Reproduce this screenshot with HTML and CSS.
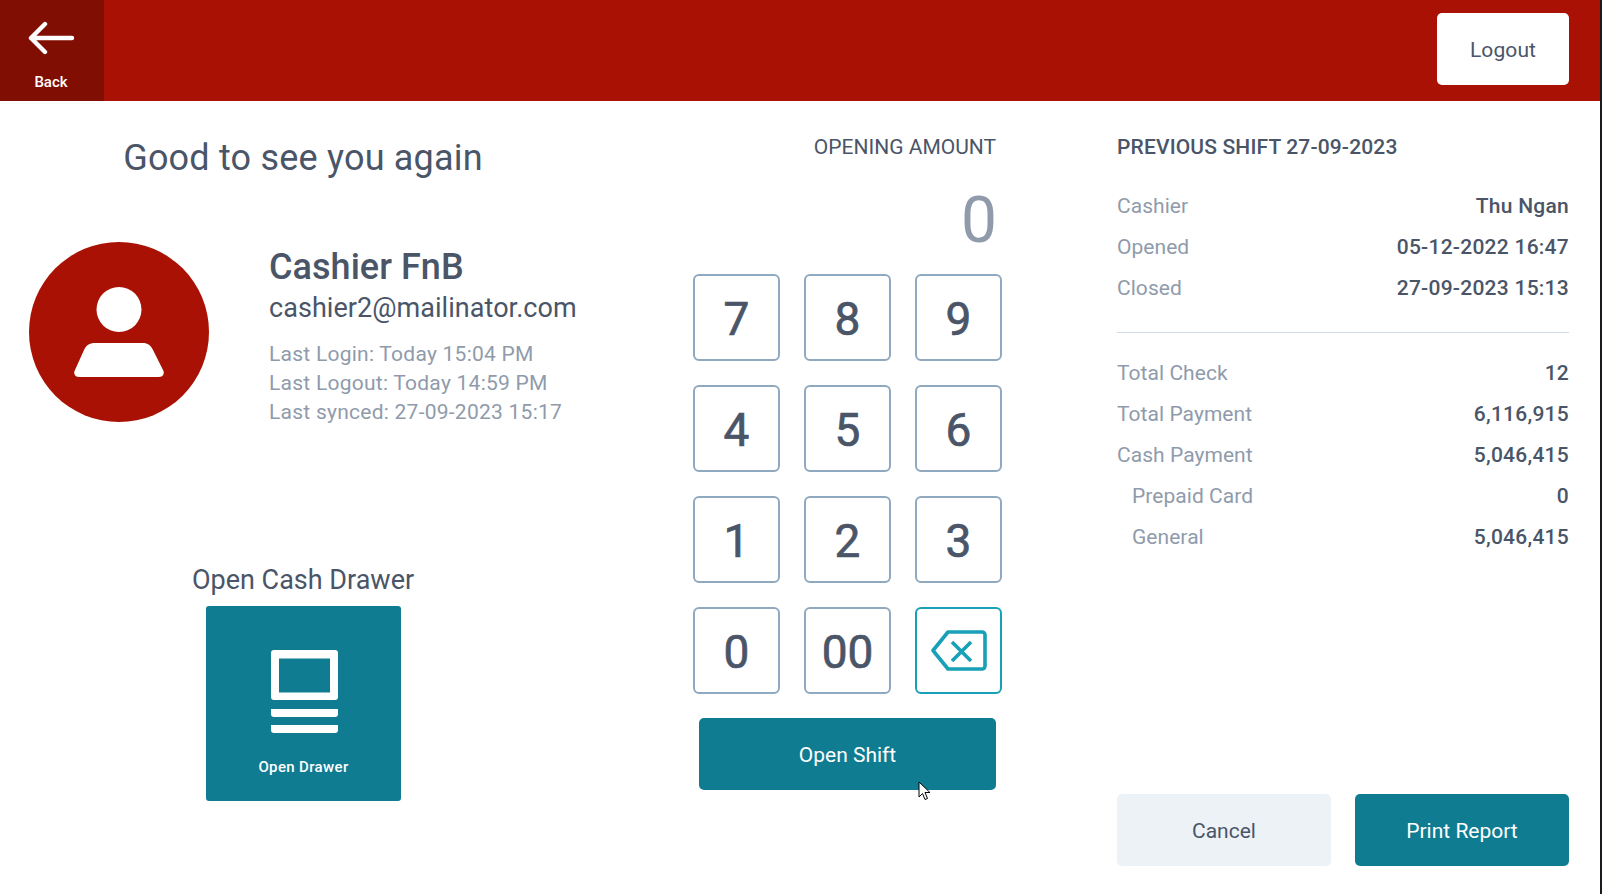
FILE: index.html
```html
<!DOCTYPE html>
<html lang="en">
<head>
<meta charset="utf-8">
<title>Open Shift</title>
<link rel="stylesheet" href="styles.css">
</head>
<body>
<div class="app">
  <header class="topbar">
    <button class="back">
      <svg class="back-icon" viewBox="0 0 48 34" width="48" height="34"><path d="M44 17H3M17 3 3 17l14 14" fill="none" stroke="#fff" stroke-width="4.400" stroke-linecap="round" stroke-linejoin="round"/></svg>
      <span>Back</span>
    </button>
    <button class="logout">Logout</button>
  </header>
  <main class="content">
    <section class="col-left">
      <h1 class="greeting">Good to see you again</h1>
      <div class="profile">
        <div class="avatar">
          <svg viewBox="0 0 180 180" width="180" height="180"><circle cx="90" cy="90" r="90" fill="#a81103"/><ellipse cx="90" cy="67.500" rx="22.500" ry="22.500" fill="#fff"/><path d="M66 101h48c4.500 0 8 2.500 10 7l10 20c2 3.500 0 7-4 7H50c-4 0-6-3.500-4-7l9-20c2-4.500 5.500-7 11-7z" fill="#fff"/></svg>
        </div>
        <div class="who">
          <div class="name">Cashier FnB</div>
          <div class="email">cashier2@mailinator.com</div>
          <div class="meta">Last Login: Today 15:04 PM</div>
          <div class="meta">Last Logout: Today 14:59 PM</div>
          <div class="meta">Last synced: 27-09-2023 15:17</div>
        </div>
      </div>
      <div class="drawer">
        <div class="drawer-title">Open Cash Drawer</div>
        <button class="drawer-tile">
          <svg viewBox="0 0 68 84" width="68" height="84"><path fill-rule="evenodd" d="M3 0h61a3 3 0 0 1 3 3v44a3 3 0 0 1-3 3H3a3 3 0 0 1-3-3V3a3 3 0 0 1 3-3zm5 8.500v34h51v-34zM0 59h67v5a3 3 0 0 1-3 3H3a3 3 0 0 1-3-3zM0 75h67v5a3 3 0 0 1-3 3H3a3 3 0 0 1-3-3z" fill="#fff"/></svg>
          <span>Open Drawer</span>
        </button>
      </div>
    </section>
    <section class="col-mid">
      <div class="amount-label">OPENING AMOUNT</div>
      <div class="amount">0</div>
      <div class="keypad">
        <button class="key">7</button><button class="key">8</button><button class="key">9</button>
        <button class="key">4</button><button class="key">5</button><button class="key">6</button>
        <button class="key">1</button><button class="key">2</button><button class="key">3</button>
        <button class="key">0</button><button class="key">00</button>
        <button class="key key-del">
          <svg viewBox="0 0 56 42" width="56" height="42"><path d="M17 2h34a3 3 0 0 1 3 3v31a3 3 0 0 1-3 3H17L2 20.500z" fill="none" stroke="#17a0b8" stroke-width="3.600" stroke-linejoin="round"/><path d="M21 12l19 19M40 12 21 31" fill="none" stroke="#17a0b8" stroke-width="3.600"/></svg>
        </button>
      </div>
      <button class="btn btn-teal open-shift">Open Shift</button>
      <svg class="cursor" viewBox="0 0 13 20" width="13" height="20"><path d="M1 1v15l3.500-3.500 2.500 6 2.500-1-2.500-6h5z" fill="#fff" stroke="#000" stroke-width="1"/></svg>
    </section>
    <section class="col-right">
      <h2 class="prev-title">PREVIOUS SHIFT 27-09-2023</h2>
      <div class="rows rows-top">
        <div class="row"><span>Cashier</span><b>Thu Ngan</b></div>
        <div class="row"><span>Opened</span><b>05-12-2022 16:47</b></div>
        <div class="row"><span>Closed</span><b>27-09-2023 15:13</b></div>
      </div>
      <div class="rows rows-bottom">
        <div class="row"><span>Total Check</span><b>12</b></div>
        <div class="row"><span>Total Payment</span><b>6,116,915</b></div>
        <div class="row"><span>Cash Payment</span><b>5,046,415</b></div>
        <div class="row row-sub"><span>Prepaid Card</span><b>0</b></div>
        <div class="row row-sub"><span>General</span><b>5,046,415</b></div>
      </div>
      <div class="actions">
        <button class="btn btn-grey">Cancel</button>
        <button class="btn btn-teal">Print Report</button>
      </div>
    </section>
  </main>
</div>
</body>
</html>
```
FILE: styles.css
```css
* { box-sizing: border-box; }
html, body { margin: 0; height: 100%; }
body {
  background: #1a1a20;
  font-family: Roboto, "Liberation Sans", sans-serif;
  color: #4a5568;
  overflow: hidden;
}
button { font-family: inherit; border: 0; padding: 0; cursor: pointer; }
.app {
  width: 1600px;
  height: 894px;
  background: #fff;
  display: flex;
  flex-direction: column;
}
.topbar {
  height: 101px;
  flex: none;
  background: #a81103;
  display: flex;
  justify-content: space-between;
  align-items: flex-start;
  padding-right: 31px;
}
.back {
  width: 104px;
  height: 101px;
  background: #800e03;
  color: #fff;
  font-size: 15px;
  font-weight: 500;
  display: flex;
  flex-direction: column;
  align-items: center;
  padding-top: 21px;
  gap: 18px;
}
.back-icon { display: block; }
.back span { line-height: 19px; margin-right: 2px; }
.logout {
  width: 132px;
  height: 72px;
  margin-top: 13px;
  padding-top: 2px;
  background: #fff;
  color: #4a5568;
  border-radius: 5px;
  font-size: 21px;
  letter-spacing: 0.1px;
}
.content { flex: 1; display: flex; min-height: 0; }
.col-left { width: 606px; flex: none; display: flex; flex-direction: column; }
.greeting {
  margin: 35px 0 0;
  font-size: 36px;
  font-weight: 400;
  line-height: 44px;
  text-align: center;
  letter-spacing: 0.2px;
}
.profile { display: flex; margin-top: 62px; padding-left: 29px; }
.avatar { width: 180px; height: 180px; flex: none; }
.avatar svg { display: block; }
.who { margin-left: 60px; padding-top: 3px; }
.name { font-size: 36px; font-weight: 500; line-height: 44px; letter-spacing: 0.05px; }
.email { font-size: 27px; line-height: 39px; letter-spacing: 0.05px; }
.meta { font-size: 21px; line-height: 29px; color: #8f9bab; letter-spacing: 0.25px; }
.email + .meta { margin-top: 12px; }
.drawer { margin-top: 137px; display: flex; flex-direction: column; align-items: center; }
.drawer-title { font-size: 27px; line-height: 32px; }
.drawer-tile {
  margin-top: 10px;
  width: 195px;
  height: 195px;
  background: #107c91;
  color: #fff;
  border-radius: 3px;
  font-size: 15px;
  font-weight: 500;
  display: flex;
  flex-direction: column;
  align-items: center;
  padding-top: 44px;
}
.drawer-tile svg { display: block; margin-left: 3px; }
.drawer-tile span { margin-top: 24px; margin-left: 1px; line-height: 18px; letter-spacing: 0.35px; }
.col-mid {
  width: 390px;
  flex: none;
  padding: 0 0 0 87px;
  position: relative;
  display: flex;
  flex-direction: column;
  align-items: stretch;
}
.amount-label { margin-top: 34px; font-size: 21px; line-height: 24px; text-align: right; }
.amount { margin-top: 25px; margin-right: -1px; font-size: 64px; line-height: 74px; text-align: right; color: #8f9bab; }
.keypad { margin-top: 16px; display: grid; grid-template-columns: repeat(3, 87px); grid-auto-rows: 87px; gap: 24px; }
.key {
  background: #fff;
  border: 2px solid #8fa9c0;
  border-radius: 6px;
  color: #4a5568;
  font-size: 46px;
  font-weight: 400;
  -webkit-text-stroke: 0.7px #4a5568;
  display: flex;
  align-items: center;
  justify-content: center;
  padding-top: 3px;
}
.key-del { border-color: #17a0b8; padding-top: 0; }
.btn { height: 72px; border-radius: 5px; font-size: 21px; padding-top: 2px; }
.btn-teal { background: #107c91; color: #fff; }
.btn-grey { background: #edf2f7; color: #4a5568; }
.open-shift { margin: 24px 0 0 6px; width: 297px; flex: none; }
.cursor { position: absolute; left: 312px; top: 680px; }
.col-right {
  width: 604px;
  flex: none;
  padding: 0 31px 28px 121px;
  display: flex;
  flex-direction: column;
}
.prev-title { margin: 34px 0 0; font-size: 21px; font-weight: 500; line-height: 24px; letter-spacing: 0.15px; }
.rows-top { margin-top: 26px; padding-bottom: 24px; border-bottom: 1px solid #d5dce4; }
.rows-bottom { margin-top: 19px; }
.row { display: flex; justify-content: space-between; align-items: center; height: 41px; font-size: 21px; letter-spacing: 0.05px; color: #8f9bab; }
.row b { font-weight: 500; color: #4a5568; letter-spacing: 0.25px; }
.row-sub { padding-left: 15px; }
.actions { margin-top: auto; display: flex; gap: 24px; }
.actions .btn { flex: 1; }
```
